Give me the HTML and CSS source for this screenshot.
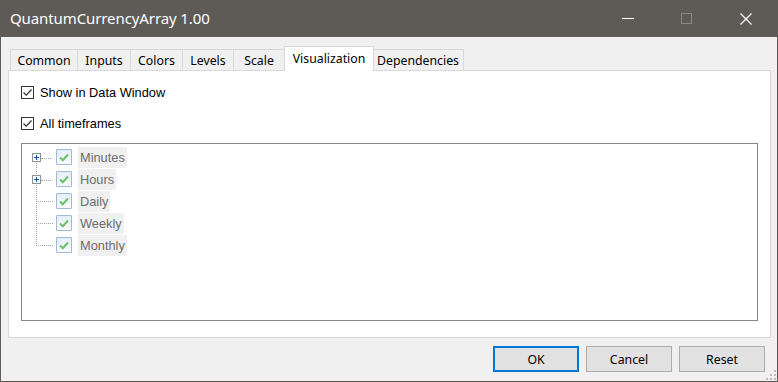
FILE: index.html
```html
<!doctype html>
<html>
    <head>
        <meta charset="utf-8">
        <title>QuantumCurrencyArray 1.00</title>
        <link rel="stylesheet" href="styles.css">
    </head>
    <body>
        <div class="window">
            <div class="titlebar">
                <span class="title">QuantumCurrencyArray 1.00</span>
                <div class="controls">
                    <span class="ctl minimize"><svg width="12" height="2"><rect width="12" height="1" fill="#fff"/></svg></span>
                    <span class="ctl maximize"><svg width="11" height="11"><rect x="0.5" y="0.5" width="10" height="10" fill="none" stroke="#8c8884"/></svg></span>
                    <span class="ctl close"><svg width="12" height="12"><path d="M0.5 0.5 L11.5 11.5 M11.5 0.5 L0.5 11.5" stroke="#fff" stroke-width="1.2"/></svg></span>
                </div>
            </div>
            <div class="client">
                <div class="tabs">
                    <div class="tab common">Common</div>
                    <div class="tab inputs">Inputs</div>
                    <div class="tab colors">Colors</div>
                    <div class="tab levels">Levels</div>
                    <div class="tab scale">Scale</div>
                    <div class="tab visual active">Visualization</div>
                    <div class="tab deps">Dependencies</div>
                </div>
                <div class="panel">
                    <label class="check">
                        <span class="box"><svg width="11" height="11"><path d="M1.5 5.5 L4.2 8.2 L9.5 2.5" fill="none" stroke="#333" stroke-width="1.2"/></svg></span>
                        Show in Data Window
                    </label>
                    <label class="check">
                        <span class="box"><svg width="11" height="11"><path d="M1.5 5.5 L4.2 8.2 L9.5 2.5" fill="none" stroke="#333" stroke-width="1.2"/></svg></span>
                        All timeframes
                    </label>
                    <div class="tree">
                        <div class="tree-rows">
                            <div class="node">
                                <span class="expander"><span class="plus"></span></span>
                                <span class="tbox"><svg width="10" height="9"><path d="M1 4.5 L3.8 7.2 L9 1.5" fill="none" stroke="#6cc06c" stroke-width="2"/></svg></span>
                                <span class="name">Minutes</span>
                            </div>
                            <div class="node">
                                <span class="expander"><span class="plus"></span></span>
                                <span class="tbox"><svg width="10" height="9"><path d="M1 4.5 L3.8 7.2 L9 1.5" fill="none" stroke="#6cc06c" stroke-width="2"/></svg></span>
                                <span class="name">Hours</span>
                            </div>
                            <div class="node">
                                <span class="expander"></span>
                                <span class="tbox"><svg width="10" height="9"><path d="M1 4.5 L3.8 7.2 L9 1.5" fill="none" stroke="#6cc06c" stroke-width="2"/></svg></span>
                                <span class="name">Daily</span>
                            </div>
                            <div class="node">
                                <span class="expander"></span>
                                <span class="tbox"><svg width="10" height="9"><path d="M1 4.5 L3.8 7.2 L9 1.5" fill="none" stroke="#6cc06c" stroke-width="2"/></svg></span>
                                <span class="name">Weekly</span>
                            </div>
                            <div class="node last">
                                <span class="expander"></span>
                                <span class="tbox"><svg width="10" height="9"><path d="M1 4.5 L3.8 7.2 L9 1.5" fill="none" stroke="#6cc06c" stroke-width="2"/></svg></span>
                                <span class="name">Monthly</span>
                            </div>
                        </div>
                    </div>
                </div>
                <div class="buttons">
                    <button class="btn default">OK</button>
                    <button class="btn">Cancel</button>
                    <button class="btn">Reset</button>
                </div>
                <div class="grip">
                    <svg width="10" height="10">
                        <rect x="8" y="0" width="2" height="2" fill="#bcbcbc"/>
                        <rect x="4" y="4" width="2" height="2" fill="#bcbcbc"/>
                        <rect x="8" y="4" width="2" height="2" fill="#bcbcbc"/>
                        <rect x="0" y="8" width="2" height="2" fill="#bcbcbc"/>
                        <rect x="4" y="8" width="2" height="2" fill="#bcbcbc"/>
                        <rect x="8" y="8" width="2" height="2" fill="#bcbcbc"/>
                    </svg>
                </div>
            </div>
        </div>
    </body>
</html>
```

FILE: styles.css
```css
html, body {
    margin: 0;
    padding: 0;
}
body {
    width: 778px;
    height: 382px;
    overflow: hidden;
    font-family: "Noto Sans", "Liberation Sans", sans-serif;
    font-size: 12px;
    color: #000;
}
.window {
    width: 778px;
    height: 382px;
    box-sizing: border-box;
    border: 1px solid #5e5a55;
    border-top: none;
    display: flex;
    flex-direction: column;
    background: #f0f0f0;
}
.titlebar {
    height: 37px;
    flex: none;
    background: #5e5a55;
    color: #fff;
    display: flex;
    align-items: center;
    margin: 0 -1px;
}
.title {
    font-size: 15px;
    padding-left: 10px;
    padding-bottom: 1px;
    letter-spacing: -0.1px;
}
.controls {
    margin-left: auto;
    display: flex;
    height: 100%;
    padding-right: 2px;
}
.ctl {
    display: flex;
    align-items: center;
    justify-content: center;
}
.minimize {
    width: 57px;
    padding-top: 1px;
}
.maximize {
    width: 60px;
}
.close {
    width: 60px;
}
.client {
    flex: 1;
    position: relative;
    padding: 9px 6px 0 7px;
}
.tabs {
    display: flex;
    height: 24px;
    align-items: flex-end;
    padding-left: 2px;
    position: relative;
    z-index: 1;
}
.tab {
    height: 21px;
    box-sizing: border-box;
    border: 1px solid #d9d9d9;
    border-bottom: none;
    border-right: none;
    background: #f0f0f0;
    line-height: 21px;
    text-align: center;
    font-family: "Noto Sans", sans-serif;
    font-size: 12.3px;
}
.common { width: 67px; }
.inputs { width: 53px; }
.colors { width: 52px; }
.levels { width: 51px; }
.scale { width: 51px; }
.visual { width: 90px; }
.deps { width: 91px; }
.tab:last-child {
    border-right: 1px solid #d9d9d9;
}
.tab.active {
    height: 25px;
    background: #fff;
    border: 1px solid #d9d9d9;
    border-bottom: none;
    margin-bottom: -1px;
    line-height: 24px;
    margin-right: -1px;
    position: relative;
}
.tab.active + .tab {
    border-left: none;
}
.panel {
    height: 268px;
    box-sizing: border-box;
    border: 1px solid #d9d9d9;
    background: #fff;
    padding: 14px 12px 0 12px;
}
.check {
    display: flex;
    align-items: center;
    height: 15px;
    margin-bottom: 16px;
    font-family: "Liberation Sans", sans-serif;
    font-size: 12.8px;
    gap: 6px;
}
.box {
    width: 13px;
    height: 13px;
    box-sizing: border-box;
    border: 1px solid #333;
    display: flex;
    align-items: center;
    justify-content: center;
}
.tree {
    margin-top: -4px;
    height: 178px;
    box-sizing: border-box;
    border: 1px solid #828790;
    padding: 2px 0 0 9px;
}
.tree-rows {
    position: relative;
}
.tree-rows::before {
    content: "";
    position: absolute;
    left: 5px;
    top: 12px;
    height: 88px;
    border-left: 1px dotted #a0a0a0;
}
.node {
    display: flex;
    align-items: center;
    height: 22px;
    position: relative;
}
.expander {
    width: 9px;
    height: 9px;
    margin-left: 1px;
    margin-right: 12px;
    position: relative;
    box-sizing: border-box;
}
.expander::after {
    content: "";
    position: absolute;
    left: 4px;
    top: 4px;
    width: 17px;
    border-top: 1px dotted #a0a0a0;
}
.expander:has(.plus) {
    border: 1px solid #919191;
    background: #fff;
    z-index: 1;
}
.expander:has(.plus)::after {
    left: 8px;
    width: 10px;
}
.plus {
    position: absolute;
    left: 1px;
    top: 3px;
    width: 5px;
    height: 1px;
    background: #1f4e99;
}
.plus::after {
    content: "";
    position: absolute;
    left: 2px;
    top: -2px;
    width: 1px;
    height: 5px;
    background: #1f4e99;
}
.tbox {
    width: 16px;
    height: 16px;
    box-sizing: border-box;
    border: 1px solid #a3b9d3;
    background: linear-gradient(#e6eef7, #f7fafd);
    border-radius: 1px;
    display: flex;
    align-items: center;
    justify-content: center;
    margin-left: 3px;
    margin-right: 6px;
}
.name {
    background: #f0f0f0;
    color: #6d6d6d;
    height: 21px;
    line-height: 21px;
    padding: 0 2px;
    font-family: "Liberation Sans", sans-serif;
    font-size: 12.8px;
}
.buttons {
    display: flex;
    justify-content: flex-end;
    gap: 7px;
    padding-top: 8px;
    padding-right: 6px;
}
.btn {
    width: 86px;
    height: 26px;
    box-sizing: border-box;
    border: 1px solid #adadad;
    background: #e1e1e1;
    font-family: "Noto Sans", sans-serif;
    font-size: 12.3px;
    color: #000;
    padding: 0;
}
.btn.default {
    border: 2px solid #0078d7;
}
.grip {
    position: absolute;
    right: 1px;
    bottom: 1px;
    line-height: 0;
}
```
